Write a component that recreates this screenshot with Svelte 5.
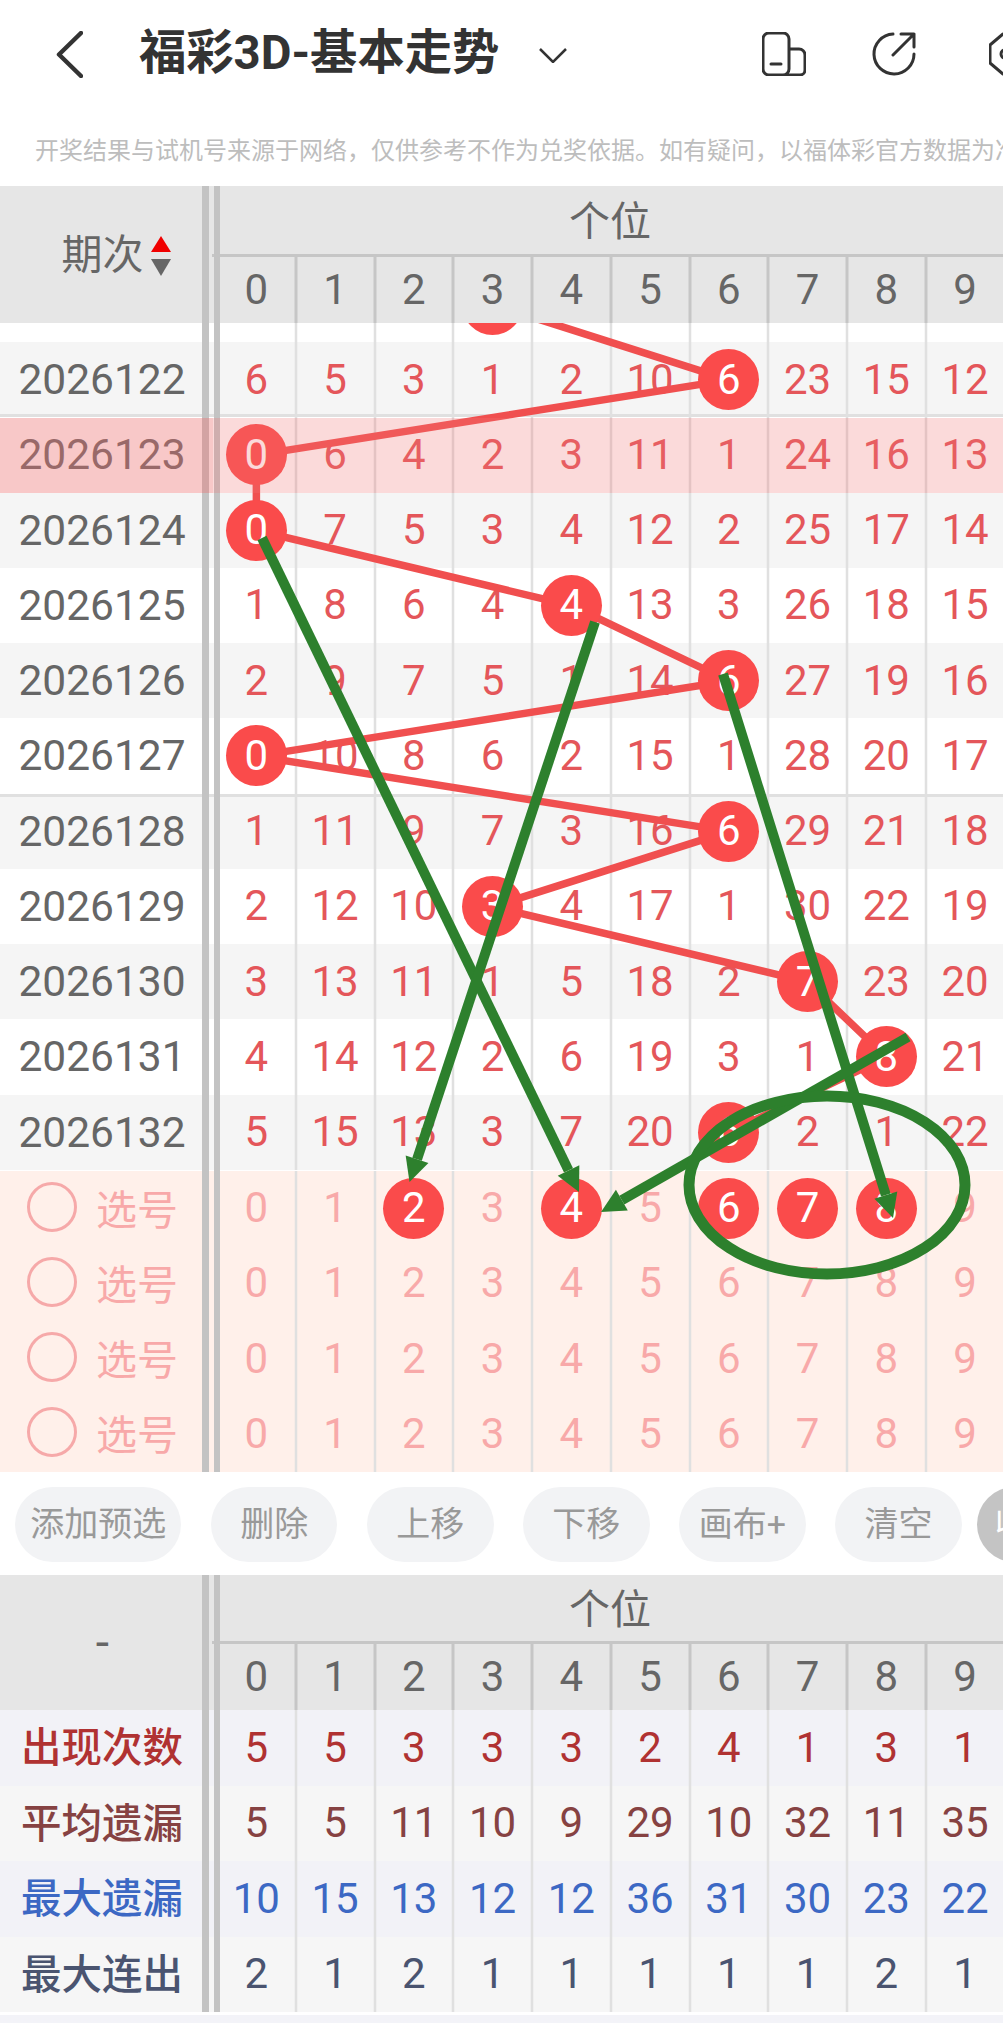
<script>
  const digits = [0, 1, 2, 3, 4, 5, 6, 7, 8, 9];
  const rows = [
    { id: '2026121', ball: 3, n: [5, 4, 2, 3, 1, 9, 5, 22, 14, 11] },
    { id: '2026122', ball: 6, n: [6, 5, 3, 1, 2, 10, 6, 23, 15, 12] },
    { id: '2026123', ball: 0, n: [0, 6, 4, 2, 3, 11, 1, 24, 16, 13] },
    { id: '2026124', ball: 0, n: [0, 7, 5, 3, 4, 12, 2, 25, 17, 14] },
    { id: '2026125', ball: 4, n: [1, 8, 6, 4, 4, 13, 3, 26, 18, 15] },
    { id: '2026126', ball: 6, n: [2, 9, 7, 5, 1, 14, 6, 27, 19, 16] },
    { id: '2026127', ball: 0, n: [0, 10, 8, 6, 2, 15, 1, 28, 20, 17] },
    { id: '2026128', ball: 6, n: [1, 11, 9, 7, 3, 16, 6, 29, 21, 18] },
    { id: '2026129', ball: 3, n: [2, 12, 10, 3, 4, 17, 1, 30, 22, 19] },
    { id: '2026130', ball: 7, n: [3, 13, 11, 1, 5, 18, 2, 7, 23, 20] },
    { id: '2026131', ball: 8, n: [4, 14, 12, 2, 6, 19, 3, 1, 8, 21] },
    { id: '2026132', ball: 6, n: [5, 15, 13, 3, 7, 20, 6, 2, 1, 22] }
  ];
  const RH = 75.25;
  const CW = 78.75;
  const cx = (c) => 217 + CW * (c + 0.5);
  const cy = (i) => RH / 2 + RH * i;
  const pts = rows.map((r, i) => `${cx(r.ball)},${cy(i)}`).join(' ');

  const selects = [[2, 4, 6, 7, 8], [], [], []];
  const buttons = ['添加预选', '删除', '上移', '下移', '画布+', '清空'];
  const stats = [
    { label: '出现次数', cls: 's1', n: [5, 5, 3, 3, 3, 2, 4, 1, 3, 1] },
    { label: '平均遗漏', cls: 's2', n: [5, 5, 11, 10, 9, 29, 10, 32, 11, 35] },
    { label: '最大遗漏', cls: 's3', n: [10, 15, 13, 12, 12, 36, 31, 30, 23, 22] },
    { label: '最大连出', cls: 's4', n: [2, 1, 2, 1, 1, 1, 1, 1, 2, 1] }
  ];

  function arrow(x1, y1, x2, y2) {
    const len = Math.hypot(x2 - x1, y2 - y1);
    const ux = (x2 - x1) / len;
    const uy = (y2 - y1) / len;
    const bx = x2 - ux * 24;
    const by = y2 - uy * 24;
    const w = 12;
    return {
      x1, y1,
      x2: bx,
      y2: by,
      head: `${x2},${y2} ${bx - uy * w},${by + ux * w} ${bx + uy * w},${by - ux * w}`
    };
  }
  const arrows = [
    arrow(262, 538, 579, 1192),
    arrow(595, 622, 409.5, 1182),
    arrow(723, 674, 893, 1218),
    arrow(908, 1037, 601, 1212)
  ];
</script>

<div class="page">
  <header class="bar">
    <svg class="back" viewBox="0 0 27 47" width="27" height="47">
      <polyline points="25,2 3,23.5 25,45" />
    </svg>
    <h1 class="title">福彩3D-基本走势</h1>
    <svg class="caret" viewBox="0 0 28 15" width="28" height="15">
      <polyline points="1,1 14,14 27,1" />
    </svg>
    <div class="tools">
      <svg class="tool" viewBox="0 0 44 44" width="44" height="44">
        <path d="M27 17h10a6 6 0 0 1 6 6v15a5 5 0 0 1-5 5H7a6 6 0 0 1-6-6V7a6 6 0 0 1 6-6h14a6 6 0 0 1 6 6v30a6 6 0 0 1-6 6" />
        <path d="M9 32h10" />
      </svg>
      <svg class="tool t2" viewBox="0 0 44 44" width="44" height="44">
        <path d="M21 2A20 20 0 1 0 42 22" />
        <path d="M21 23 42 2M29 2h13v13" />
      </svg>
      <svg class="tool t3" viewBox="0 0 44 44" width="44" height="44">
        <path d="M14 2 1 13v18l13 11" />
        <circle cx="16" cy="22" r="4" />
      </svg>
    </div>
  </header>

  <p class="notice">开奖结果与试机号来源于网络，仅供参考不作为兑奖依据。如有疑问，以福体彩官方数据为准。</p>

  <section class="tbl">
    <div class="head h1">
      <div class="corner">
        <span class="sortable">期次
          <svg class="sort" viewBox="0 0 20 40" width="20" height="40">
            <polygon points="10,0 20,16 0,16" fill="#f00000" />
            <polygon points="0,23 20,23 10,40" fill="#666" />
          </svg>
        </span>
      </div>
      <div class="groups">
        <div class="gname">个位</div>
        <div class="nums">
          {#each digits as d}<span class="c">{d}</span>{/each}
        </div>
      </div>
    </div>

    <div class="scroller">
      <div class="list">
        <svg class="trace" width="1003" height="903" viewBox="0 0 1003 903">
          <polyline points={pts} />
        </svg>
        {#each rows as r, i}
          <div class="row" class:alt={i % 2 === 1} class:sepb={i === 1} class:sept={i === 7}>
            <div class="period">{r.id}</div>
            {#each r.n as v, c}
              <span class="c num">{#if c === r.ball}<b class="ball">{v}</b>{:else}{v}{/if}</span>
            {/each}
            {#if i === 2}<i class="hl"></i><i class="hl hl-left"></i>{/if}
          </div>
        {/each}
      </div>
    </div>

    <div class="picks">
      {#each selects as sel}
        <div class="row pick">
          <div class="chooser"><i class="radio"></i><span>选号</span></div>
          {#each digits as d}
            <span class="c num">{#if sel.includes(d)}<b class="ball">{d}</b>{:else}{d}{/if}</span>
          {/each}
        </div>
      {/each}
    </div>
  </section>

  <div class="actions">
    {#each buttons as b}<button class="pill">{b}</button>{/each}
    <button class="pill fold">收起</button>
  </div>

  <section class="tbl">
    <div class="head h2">
      <div class="corner"><span class="dash">-</span></div>
      <div class="groups">
        <div class="gname">个位</div>
        <div class="nums">
          {#each digits as d}<span class="c">{d}</span>{/each}
        </div>
      </div>
    </div>
    {#each stats as s}
      <div class="row stat {s.cls}">
        <div class="period label">{s.label}</div>
        {#each s.n as v}<span class="c num">{v}</span>{/each}
      </div>
    {/each}
  </section>
  <div class="tail"></div>

  <svg class="ink" width="1003" height="2023" viewBox="0 0 1003 2023">
    {#each arrows as a}
      <line x1={a.x1} y1={a.y1} x2={a.x2} y2={a.y2} />
      <polygon points={a.head} />
    {/each}
    <ellipse cx="827" cy="1185" rx="138" ry="89" />
  </svg>
</div>

<style>
  :global(body) {
    margin: 0;
    background: #fff;
  }
  .page {
    position: relative;
    width: 1003px;
    height: 2023px;
    overflow: hidden;
    background: #fff;
    font-family: Roboto, "Noto Sans CJK SC", sans-serif;
  }
  .bar {
    height: 108px;
    display: flex;
    align-items: center;
    padding-left: 56px;
    box-sizing: border-box;
    overflow: hidden;
  }
  .back polyline {
    fill: none;
    stroke: #333;
    stroke-width: 4.5;
    stroke-linecap: round;
    stroke-linejoin: round;
  }
  .title {
    margin: 0 0 0 56px;
    font-size: 47.3px;
    line-height: 1;
    font-weight: 700;
    color: #333;
    white-space: nowrap;
  }
  .caret {
    margin-left: 40px;
    margin-top: 2px;
  }
  .caret polyline {
    fill: none;
    stroke: #333;
    stroke-width: 2.5;
  }
  .tools {
    margin-left: auto;
    display: flex;
    flex: none;
    width: 241px;
  }
  .tool {
    flex: none;
  }
  .tool path,
  .tool circle {
    fill: none;
    stroke: #333;
    stroke-width: 3;
    stroke-linecap: round;
    stroke-linejoin: round;
  }
  .t2 {
    margin-left: 66px;
  }
  .t3 {
    margin-left: 73px;
  }
  .notice {
    margin: 0;
    height: 78px;
    box-sizing: border-box;
    padding: 29px 0 0 35px;
    font-size: 24px;
    line-height: 28px;
    color: #bdbdbd;
    white-space: nowrap;
    overflow: hidden;
  }

  .tbl {
    position: relative;
  }
  .tbl::after {
    content: "";
    position: absolute;
    left: 202px;
    top: 0;
    bottom: 0;
    width: 5px;
    border-left: 7px solid #c3c3c3;
    border-right: 6px solid #c3c3c3;
    z-index: 0;
  }
  .head {
    display: grid;
    grid-template-columns: 217px 1fr;
    background: #e6e6e6;
    color: #666;
  }
  .h1 {
    height: 137px;
  }
  .h2 {
    height: 135px;
  }
  .corner {
    width: 205px;
    display: flex;
    align-items: center;
    justify-content: center;
    font-size: 41px;
    line-height: 48px;
  }
  .sortable {
    position: relative;
  }
  .sort {
    position: absolute;
    left: 100%;
    top: 5px;
    margin-left: 7px;
  }
  .dash {
    font-size: 48px;
  }
  .groups {
    display: flex;
    flex-direction: column;
    min-width: 0;
  }
  .gname {
    flex: none;
    height: 71px;
    display: flex;
    align-items: center;
    justify-content: center;
    font-size: 41px;
    border-bottom: 3px solid #c6c6c6;
    margin-left: -5px;
    padding: 0 0 5px 5px;
    box-sizing: border-box;
  }
  .h2 .gname {
    height: 69px;
  }
  .nums {
    flex: 1;
    display: grid;
    grid-template-columns: repeat(10, 78.75px);
  }
  .c {
    display: flex;
    align-items: center;
    justify-content: center;
    font-size: 42px;
    line-height: 1;
    min-width: 0;
  }
  .nums .c + .c {
    box-shadow: inset 1.5px 0 0 #c6c6c6, -1.5px 0 0 #c6c6c6;
  }

  .scroller {
    height: 847.5px;
    overflow: hidden;
  }
  .list {
    position: relative;
    margin-top: -56.2px;
  }
  .trace {
    position: absolute;
    left: 0;
    top: 0;
    z-index: 1;
  }
  .trace polyline {
    fill: none;
    stroke: #f04f4f;
    stroke-width: 7.5;
  }
  .row {
    position: relative;
    display: grid;
    grid-template-columns: 217px repeat(10, 78.75px);
    height: 75.25px;
    background: #fff;
  }
  .row.alt {
    background: #f5f5f5;
  }
  .sepb {
    box-shadow: inset 0 -3px 0 #e0e0e0;
  }
  .sept {
    box-shadow: inset 0 3px 0 #e0e0e0;
  }
  .period {
    width: 204px;
    display: flex;
    align-items: center;
    justify-content: center;
    font-size: 42.5px;
    color: #666;
  }
  .num {
    color: #e4565a;
  }
  .row .num + .num {
    box-shadow: inset 1.25px 0 0 #e0e0e0, -1.25px 0 0 #e0e0e0;
  }
  .ball {
    position: relative;
    z-index: 2;
    width: 61px;
    height: 61px;
    flex: none;
    display: flex;
    align-items: center;
    justify-content: center;
    border-radius: 50%;
    background: #fa4b4b;
    color: #fff;
    font-weight: 400;
  }
  .hl {
    position: absolute;
    inset: 1px 0 0 0;
    background: rgba(240, 120, 120, 0.27);
    z-index: 3;
  }
  .hl-left {
    right: auto;
    width: 213px;
    background: rgba(235, 100, 100, 0.15);
  }

  .picks .pick {
    background: #fff0ea;
  }
  .pick .num {
    color: #f8a9a9;
  }
  .pick .ball {
    color: #fff;
  }
  .chooser {
    width: 202px;
    display: flex;
    align-items: center;
    gap: 19px;
    padding: 0 0 3px 27px;
    box-sizing: border-box;
    font-size: 41px;
    color: #f8a9a9;
  }
  .radio {
    width: 50px;
    height: 50px;
    box-sizing: border-box;
    border: 3px solid #f6a9a9;
    border-radius: 50%;
    flex: none;
  }

  .actions {
    height: 103.5px;
    box-sizing: border-box;
    display: flex;
    gap: 29.5px;
    padding: 15px 0 0 15px;
    overflow: hidden;
  }
  .pill {
    flex: none;
    height: 75px;
    min-width: 126.6px;
    padding: 0 15.2px 5px;
    border: 0;
    border-radius: 38px;
    background: #f2f3f5;
    color: #999;
    font: 34px Roboto, "Noto Sans CJK SC", sans-serif;
  }
  .fold {
    margin-left: -14.6px;
    min-width: 0;
    padding-left: 18px;
    background: #c4c4c4;
    color: #fff;
  }

  .stat {
    height: 75.5px;
  }
  .stat .label {
    font-size: 40.5px;
    font-weight: 500;
    padding-bottom: 6px;
    box-sizing: border-box;
  }
  .s1,
  .s3 {
    background: #f2f2f7;
  }
  .s2,
  .s4 {
    background: #f6f6f6;
  }
  .s1 .num,
  .s1 .label {
    color: #b03232;
  }
  .s2 .num,
  .s2 .label {
    color: #864242;
  }
  .s3 .num,
  .s3 .label {
    color: #3c68c4;
  }
  .s4 .num,
  .s4 .label {
    color: #4a5470;
  }
  .tail {
    margin-top: 3px;
    height: 8px;
    background: #f3f3f8;
  }

  .ink {
    position: absolute;
    left: 0;
    top: 0;
    z-index: 5;
    pointer-events: none;
  }
  .ink line {
    stroke: #2d802d;
    stroke-width: 10;
  }
  .ink polygon {
    fill: #2d802d;
  }
  .ink ellipse {
    fill: none;
    stroke: #2d802d;
    stroke-width: 11;
  }
</style>
